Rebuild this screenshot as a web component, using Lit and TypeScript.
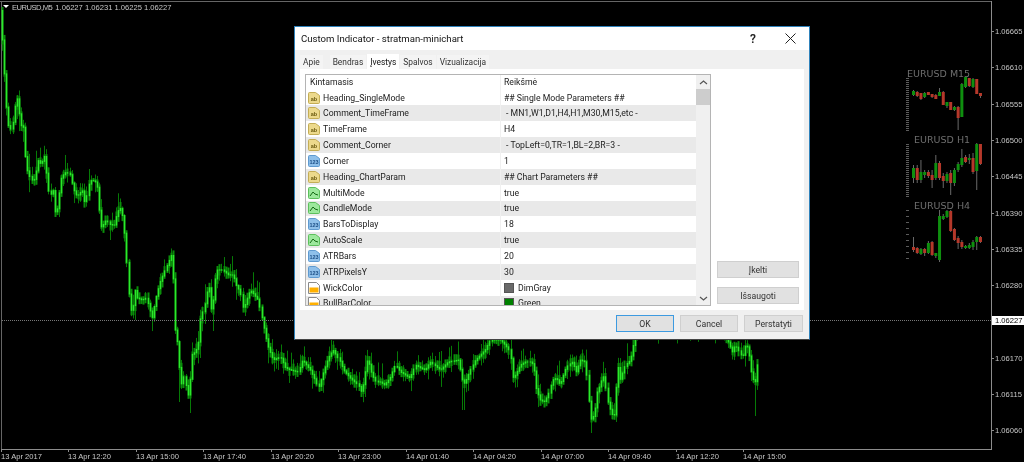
import { css, html, svg, LitElement } from 'lit'
import { customElement } from 'lit/decorators.js'

// close price trace of the main chart, [x, y] in screen pixels
const TRACE: [number, number][] = [
  [1, 26], [2, 40], [3, 60], [5, 85], [6, 105], [8, 125], [11, 130], [13, 120], [16, 95], [18, 105], [20, 125],
  [24, 128], [25, 155], [27, 170], [30, 178], [33, 182], [36, 170], [38, 160], [41, 165], [44, 155], [46, 170],
  [48, 190], [50, 195], [53, 190], [55, 215], [58, 205], [60, 180], [63, 175], [66, 172], [70, 175], [72, 185],
  [75, 195], [78, 195], [82, 190], [85, 205], [88, 185], [91, 180], [95, 182], [98, 190], [100, 228], [103, 225],
  [106, 220], [110, 225], [114, 225], [117, 212], [120, 208], [123, 218], [125, 240], [127, 270], [129, 300],
  [131, 312], [133, 305], [135, 290], [137, 298], [142, 300], [146, 298], [150, 312], [152, 318], [155, 300],
  [160, 282], [168, 262], [171, 255], [173, 280], [175, 330], [177, 340], [179, 365], [181, 385], [184, 375],
  [187, 395], [189, 395], [191, 355], [195, 352], [198, 345], [200, 320], [203, 310], [206, 298], [208, 280],
  [211, 310], [213, 300], [216, 270], [222, 270], [228, 275], [233, 275], [236, 285], [240, 292], [243, 310],
  [246, 300], [250, 290], [255, 296], [258, 300], [262, 320], [267, 345], [273, 360], [280, 357], [285, 368],
  [290, 370], [298, 372], [302, 360], [306, 365], [310, 370], [314, 378], [318, 388], [323, 372], [328, 358],
  [333, 350], [340, 362], [343, 370], [350, 378], [358, 385], [361, 392], [364, 380], [366, 362], [368, 360],
  [372, 375], [376, 382], [380, 382], [384, 385], [390, 378], [395, 365], [400, 372], [405, 375], [410, 378],
  [415, 365], [420, 368], [425, 370], [430, 362], [435, 366], [440, 370], [448, 362], [458, 360], [460, 370],
  [463, 385], [466, 380], [470, 370], [475, 360], [480, 355], [485, 350], [490, 340], [500, 340], [505, 345],
  [510, 352], [512, 378], [515, 375], [520, 365], [525, 362], [530, 362], [533, 365], [536, 390], [540, 400],
  [544, 402], [548, 395], [552, 380], [556, 378], [560, 385], [565, 370], [568, 365], [572, 362], [576, 372],
  [580, 360], [585, 362], [587, 380], [590, 420], [594, 415], [597, 392], [600, 385], [603, 375], [605, 385],
  [608, 405], [612, 415], [615, 415], [617, 360], [620, 380], [625, 365], [630, 360], [633, 345], [636, 335],
  [640, 330], [720, 330], [727, 340], [732, 352], [735, 345], [738, 350], [742, 358], [745, 345], [748, 348],
  [750, 365], [752, 378], [755, 382], [757, 380], [758, 340], [758, 320],
]

// long lower wicks that stand out in the chart, [x, low]
const SPIKES: [number, number][] = [
  [135, 320], [180, 402], [189, 413], [212, 331], [364, 397], [463, 410], [590, 433], [755, 416],
]

const PRICES: [string, number][] = [
  ['1.06665', 31], ['1.06610', 67], ['1.06555', 104], ['1.06500', 140], ['1.06445', 176], ['1.06390', 213],
  ['1.06335', 249], ['1.06280', 285], ['1.06170', 358], ['1.06115', 394], ['1.06060', 430],
]

const TIMES: [string, number][] = [
  ['13 Apr 2017', 1], ['13 Apr 12:20', 68], ['13 Apr 15:00', 136], ['13 Apr 17:40', 203], ['13 Apr 20:20', 271],
  ['13 Apr 23:00', 338], ['14 Apr 01:40', 406], ['14 Apr 04:20', 473], ['14 Apr 07:00', 541], ['14 Apr 09:40', 608],
  ['14 Apr 12:20', 676], ['14 Apr 15:00', 743],
]

// mini chart candles: bar index, body top, body bottom, wick top, wick bottom, bull?
type Bar = [number, number, number, number, number, boolean]

const MINI_M15: Bar[] = [
  [0, 91, 95, 90, 96, true], [1, 92, 96, 91, 97, false], [2, 93, 99, 93, 100, false], [3, 93, 97, 92, 98, true],
  [4, 92, 95, 92, 95, false], [5, 94, 97, 94, 98, false], [6, 95, 99, 94, 99, false], [7, 92, 96, 88, 96, true],
  [8, 92, 105, 91, 105, false], [9, 102, 106, 102, 108, true], [10, 102, 110, 102, 110, false],
  [11, 107, 110, 106, 111, true], [12, 107, 118, 106, 130, false], [13, 84, 117, 83, 117, true],
  [14, 77, 87, 77, 88, true], [15, 78, 86, 78, 87, false], [16, 79, 87, 78, 88, true], [17, 79, 94, 79, 94, false],
  [18, 93, 96, 93, 98, false],
]

const MINI_H1: Bar[] = [
  [0, 168, 178, 165, 183, true], [1, 168, 180, 165, 183, false], [2, 172, 180, 160, 183, true],
  [3, 172, 175, 170, 178, true], [4, 172, 176, 170, 178, false], [5, 175, 180, 170, 188, false],
  [6, 163, 178, 155, 180, true], [7, 163, 178, 161, 180, false], [8, 176, 181, 173, 188, false],
  [9, 174, 181, 172, 183, true], [10, 173, 183, 170, 195, false], [11, 170, 183, 168, 186, true],
  [12, 164, 170, 162, 172, true], [13, 158, 165, 149, 167, true], [14, 157, 162, 155, 163, false],
  [15, 158, 160, 154, 164, true], [16, 158, 172, 153, 174, false], [17, 144, 171, 143, 190, true],
  [18, 144, 164, 144, 165, false],
]

const MINI_H4: Bar[] = [
  [0, 247, 250, 237, 252, false], [1, 248, 253, 247, 254, false], [2, 249, 254, 248, 255, true],
  [3, 249, 253, 248, 256, false], [4, 243, 253, 241, 254, true], [5, 242, 255, 241, 256, false],
  [6, 253, 256, 253, 258, true], [7, 216, 260, 210, 262, true], [8, 216, 219, 214, 220, true],
  [9, 211, 217, 210, 218, true], [10, 211, 231, 210, 232, false], [11, 229, 240, 228, 241, false],
  [12, 238, 243, 236, 249, false], [13, 242, 247, 240, 249, false], [14, 246, 248, 245, 249, true],
  [15, 245, 248, 243, 249, true], [16, 242, 247, 240, 250, true], [17, 237, 242, 236, 250, true],
  [18, 237, 242, 236, 243, false],
]

const ROWS: [string, string, string][] = [
  ['str', 'Heading_SingleMode', '## Single Mode Parameters ##'],
  ['str', 'Comment_TimeFrame', '- MN1,W1,D1,H4,H1,M30,M15,etc -'],
  ['str', 'TimeFrame', 'H4'],
  ['str', 'Comment_Corner', '- TopLeft=0,TR=1,BL=2,BR=3 -'],
  ['num', 'Corner', '1'],
  ['str', 'Heading_ChartParam', '## Chart Parameters ##'],
  ['bool', 'MultiMode', 'true'],
  ['bool', 'CandleMode', 'true'],
  ['num', 'BarsToDisplay', '18'],
  ['bool', 'AutoScale', 'true'],
  ['num', 'ATRBars', '20'],
  ['num', 'ATRPixelsY', '30'],
  ['color', 'WickColor', 'DimGray'],
  ['color', 'BullBarColor', 'Green'],
]

const interp = (x: number) => {
  for (let i = 1; i < TRACE.length; i++) {
    const [x0, y0] = TRACE[i - 1]
    const [x1, y1] = TRACE[i]
    if (x <= x1) return y0 + ((y1 - y0) * (x - x0)) / Math.max(x1 - x0, 0.01)
  }
  return TRACE[TRACE.length - 1][1]
}

const noise = (n: number) => {
  const v = Math.sin(n * 12.9898) * 43758.5453
  return v - Math.floor(v)
}

const mainCandles = () => {
  const step = 2.11
  const out = []
  let i = 0
  for (let x = 2; x < 758; x += step) {
    const a = interp(x - step)
    const b = interp(x)
    const top = Math.min(a, b) - noise(i + 900) * 2
    const bottom = Math.max(a, b) + noise(i + 1300) * 2
    const hi = top - noise(i) * noise(i + 200) * 20
    let lo = bottom + noise(i + 500) * noise(i + 700) * 18
    for (const [sx, sy] of SPIKES) if (Math.abs(sx - x) < 1.1) lo = sy
    const px = Math.round(x) + 0.5
    out.push(svg`<line class="wick" x1=${px} x2=${px} y1=${hi} y2=${lo}></line>
      <line class="shade" x1=${px} x2=${px} y1=${top - noise(i + 40) * 5} y2=${bottom + noise(i + 80) * 5}></line>`)
    i++
  }
  // bright closes go on top so that the dark wicks of the next bar don't hide them
  i = 0
  for (let x = 2; x < 758; x += step) {
    const a = interp(x - step)
    const b = interp(x)
    const px = Math.round(x) + 0.5
    out.push(svg`<line class="body" x1=${px} x2=${px} y1=${Math.min(a, b) - 0.5} y2=${Math.max(a, b) + 0.5}></line>`)
    i++
  }
  return out
}

const miniChart = (
  title: string,
  titleX: number,
  titleY: number,
  bars: Bar[],
  axisTop: number,
  axisBottom: number,
  tickStep: number,
) => {
  const ticks = []
  for (let y = axisTop; y <= axisBottom; y += tickStep) {
    ticks.push(svg`<line class="mini-tick" x1="906" x2="909" y1=${y + 0.5} y2=${y + 0.5}></line>`)
  }
  return svg`
    <text class="mini-title" x=${titleX} y=${titleY}>${title}</text>
    ${ticks}
    ${bars.map(([n, top, bottom, hi, lo, bull]) => {
      const x = 913.5 + n * 3.72
      return svg`<line class="mini-wick" x1=${x} x2=${x} y1=${hi} y2=${lo}></line>
        <rect class=${bull ? 'mini-bull' : 'mini-bear'} x=${x - 1.5} y=${top} width="3" height=${bottom - top}></rect>`
    })}`
}

const rowIcon = (kind: string) => {
  if (kind === 'color') {
    return html`<svg class="icon" viewBox="0 0 14 14">
      <path d="M1.5 1.5h8l3 3v8h-11z" fill="#fff" stroke="#8a8a8a"></path>
      <rect x="2.5" y="6.5" width="9" height="5" fill="#ffb000"></rect>
    </svg>`
  }
  const colors: Record<string, [string, string]> = {
    str: ['#ecd98c', '#c4ad55'],
    num: ['#8fc0ea', '#5f9ad0'],
    bool: ['#9ce89c', '#5cc05c'],
  }
  const [fill, line] = colors[kind]
  return html`<svg class="icon" viewBox="0 0 14 14">
    <path d="M1.5 2.5q0-1 1-1h6l4 3v7q0 1-1 1h-9q-1 0-1-1z" fill=${fill} stroke=${line}></path>
    ${kind === 'str' ? svg`<text class="icon-text" x="7" y="10" fill="#6b5a10">ab</text>` : ''}
    ${kind === 'num' ? svg`<text class="icon-text" x="7" y="10" fill="#1d4f86">123</text>` : ''}
    ${kind === 'bool' ? svg`<path d="M3 10l3-4 2 2 3 1" fill="none" stroke="#146a14"></path>` : ''}
  </svg>`
}

@customElement('app-root')
export class AppRoot extends LitElement {
  private renderChart() {
    return html`<svg class="chart" width="1024" height="462" viewBox="0 0 1024 462">
      <line class="frame dim" x1="0" x2="992" y1="1.5" y2="1.5"></line>
      <line class="frame dim" x1="1.5" x2="1.5" y1="1" y2="449"></line>
      <line class="frame" x1="1" x2="992" y1="449.5" y2="449.5"></line>
      <line class="frame" x1="991.5" x2="991.5" y1="1" y2="450"></line>
      <path d="M3 5h6l-3 3z" fill="#fff"></path>
      <text class="legend" x="12" y="10"><tspan class="symbol">EURUSD,M5</tspan> <tspan dx="1">1.06227 1.06231 1.06225 1.06227</tspan></text>
      ${mainCandles()}
      <line class="last-price" x1="2" x2="991" y1="320.5" y2="320.5"></line>
      ${PRICES.map(([label, y]) => svg`
        <line class="frame" x1="991" x2="994" y1=${y + 0.5} y2=${y + 0.5}></line>
        <text class="axis" x="995" y=${y + 3}>${label}</text>`)}
      <rect x="992" y="316" width="32" height="9" fill="#fff"></rect>
      <text class="axis current" x="995" y="323">1.06227</text>
      ${TIMES.map(([label, x]) => svg`
        <line class="frame" x1=${x + 0.5} x2=${x + 0.5} y1="449" y2="452"></line>
        <text class="axis" x=${x} y="459">${label}</text>`)}
      ${miniChart('EURUSD M15', 907, 77, MINI_M15, 78, 130, 2)}
      ${miniChart('EURUSD H1', 914, 143, MINI_H1, 144, 196, 2)}
      ${miniChart('EURUSD H4', 914, 209, MINI_H4, 210, 263, 6)}
    </svg>`
  }

  render() {
    return html`
      ${this.renderChart()}
      <div class="dialog">
        <div class="titlebar">
          <span class="title">Custom Indicator - stratman-minichart</span>
          <span class="help">?</span>
          <svg class="close" viewBox="0 0 11 11" width="11" height="11">
            <path d="M.5.5l10 10M10.5.5l-10 10" stroke="#222" fill="none"></path>
          </svg>
        </div>
        <div class="tabs">
          <span class="tab">Apie</span>
          <span class="tab">Bendras</span>
          <span class="tab active">Įvestys</span>
          <span class="tab">Spalvos</span>
          <span class="tab">Vizualizacija</span>
        </div>
        <div class="panel">
          <div class="list">
            <div class="table">
              <div class="row head">
                <span class="name">Kintamasis</span>
                <span class="value">Reikšmė</span>
              </div>
              ${ROWS.map(([kind, name, value], i) => html`
                <div class="row ${i % 2 ? 'alt' : ''}">
                  <span class="name">${rowIcon(kind)}${name}</span>
                  <span class="value ${value.startsWith('-') ? 'indent' : ''}">
                    ${kind === 'color'
                      ? html`<i class="swatch ${value === 'Green' ? 'green' : 'gray'}"></i>`
                      : ''}${value}
                  </span>
                </div>`)}
            </div>
            <div class="scrollbar">
              <svg viewBox="0 0 9 5" width="9" height="5"><path d="M1 4l3.5-3 3.5 3" fill="none" stroke="#555" stroke-width="1.2"></path></svg>
              <div class="thumb"></div>
              <svg class="down" viewBox="0 0 9 5" width="9" height="5"><path d="M1 1l3.5 3 3.5-3" fill="none" stroke="#555" stroke-width="1.2"></path></svg>
            </div>
          </div>
          <div class="side">
            <button>Įkelti</button>
            <button>Išsaugoti</button>
          </div>
        </div>
        <div class="footer">
          <button class="primary">OK</button>
          <button>Cancel</button>
          <button class="wide">Perstatyti</button>
        </div>
      </div>
    `
  }

  static styles = css`
    :host {
      display: block;
      position: relative;
      width: 1024px;
      height: 462px;
      overflow: hidden;
      background: #000;
      font-family: Roboto, 'Liberation Sans', sans-serif;
      filter: blur(0.4px);
    }

    .chart {
      display: block;
    }

    .frame {
      stroke: #8c8c8c;
    }

    .frame.dim {
      stroke: #666;
    }

    .wick {
      stroke: #067a06;
      stroke-width: 1;
    }

    .shade {
      stroke: #0a8f0a;
      stroke-width: 2;
    }

    .body {
      stroke: #2be82b;
      stroke-width: 1.5;
    }

    .last-price {
      stroke: #777;
      stroke-dasharray: 1 1;
    }

    .legend,
    .axis {
      font-family: 'Liberation Sans', sans-serif;
      font-size: 7.6px;
      fill: #c8c8c8;
    }

    .symbol {
      letter-spacing: -0.5px;
    }

    .axis.current {
      fill: #000;
    }

    .mini-title {
      font-family: 'DejaVu Sans', sans-serif;
      font-size: 9.5px;
      fill: #6e6e6e;
    }

    .mini-tick {
      stroke: #5c5c5c;
    }

    .mini-wick {
      stroke: #696969;
    }

    .mini-bull {
      fill: #0f8f0f;
    }

    .mini-bear {
      fill: #b5382a;
    }

    .dialog {
      position: absolute;
      left: 294px;
      top: 26px;
      width: 516px;
      height: 314px;
      box-sizing: border-box;
      display: flex;
      flex-direction: column;
      background: #f0f0f0;
      border: 1px solid #2f82bb;
      border-bottom-color: #444;
      color: #222;
      font-size: 8.7px;
    }

    .titlebar {
      display: flex;
      align-items: center;
      height: 23px;
      flex: none;
      background: #fff;
      padding: 0 13px 0 6px;
    }

    .title {
      flex: 1;
      font-size: 9.6px;
      color: #111;
    }

    .help {
      font-size: 12px;
      font-weight: 600;
      margin-right: 29px;
    }

    .tabs {
      display: flex;
      height: 14px;
      margin: 5px 5px 0;
      align-items: stretch;
      gap: 1px;
      font-size: 8.4px;
    }

    .tab {
      display: flex;
      align-items: center;
      padding: 0 3px;
      background: #f4f4f4;
      color: #333;
    }

    .tab:nth-child(2) {
      margin-left: 6px;
    }

    .tab.active {
      background: #fff;
      margin-top: -1px;
      margin-bottom: -1px;
      color: #111;
      position: relative;
    }

    .panel {
      display: flex;
      gap: 6px;
      height: 241px;
      flex: none;
      box-sizing: border-box;
      margin: 0 5px;
      padding: 5px;
      background: #fff;
    }

    .list {
      display: flex;
      width: 406px;
      height: 232px;
      flex: none;
      box-sizing: border-box;
      border: 1px solid #b4b4b4;
      overflow: hidden;
    }

    .table {
      flex: 1;
      min-width: 0;
      overflow: hidden;
    }

    .row {
      display: grid;
      grid-template-columns: 194px 1fr;
      height: 15.85px;
      align-items: center;
    }

    .row.head {
      height: 14.6px;
    }

    .row.alt {
      background: #e9e9e9;
    }

    .name {
      display: flex;
      align-items: center;
      gap: 2px;
      padding-left: 1px;
      height: 100%;
    }

    .head .name {
      padding-left: 4px;
    }

    .value {
      display: flex;
      align-items: center;
      height: 100%;
      padding-left: 3px;
      border-left: 1px solid #f0f0f0;
    }

    .value.indent {
      padding-left: 5px;
    }

    .icon {
      width: 14px;
      height: 14px;
      flex: none;
    }

    .icon-text {
      font-family: 'Liberation Sans', sans-serif;
      font-size: 5.5px;
      font-weight: 700;
      text-anchor: middle;
    }

    .swatch {
      width: 8px;
      height: 8px;
      margin-right: 4px;
      border: 0.5px solid #555;
    }

    .swatch.gray {
      background: #696969;
    }

    .swatch.green {
      background: #008000;
    }

    .scrollbar {
      display: flex;
      flex-direction: column;
      align-items: center;
      width: 14px;
      flex: none;
      background: #f0f0f0;
      padding-top: 5px;
      box-sizing: border-box;
    }

    .thumb {
      width: 14px;
      height: 16px;
      margin-top: 4px;
      background: #cdcdcd;
    }

    .down {
      margin-top: auto;
      margin-bottom: 4px;
    }

    .side {
      display: flex;
      flex-direction: column;
      justify-content: flex-end;
      gap: 9px;
      width: 82px;
      padding-bottom: 1px;
    }

    button {
      height: 17px;
      padding: 0;
      box-sizing: border-box;
      font: inherit;
      color: #333;
      background: #e1e1e1;
      border: 1px solid #cfcfcf;
    }

    .footer {
      display: flex;
      justify-content: flex-end;
      gap: 6px;
      padding: 5px 6px 0;
    }

    .footer button {
      width: 58px;
    }

    .footer button.wide {
      width: 59px;
    }

    .footer button.primary {
      border: 1.5px solid #3d9ae0;
    }
  `
}

declare global {
  interface HTMLElementTagNameMap {
    'app-root': AppRoot
  }
}
